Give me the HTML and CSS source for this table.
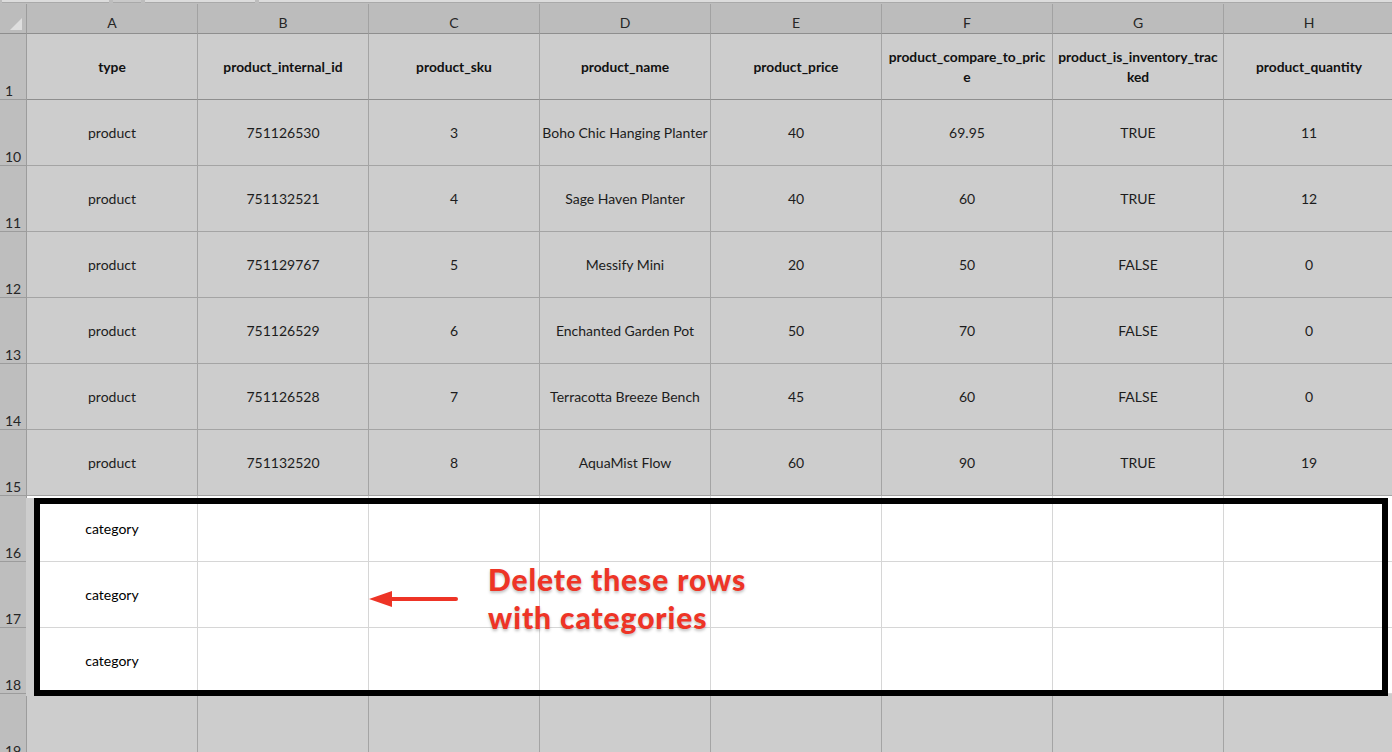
FILE: index.html
```html
<!DOCTYPE html>
<html>
<head>
<meta charset="utf-8">
<link rel="stylesheet" href="styles.css">
</head>
<body>
<div class="tabs"><span class="tab t1"></span><span class="tab t2"></span><span class="tab t3"></span><span class="tab t4"></span></div>
<div class="sheet">
  <div class="grid">
    <div class="corner"><span class="tri"></span></div>
    <div class="colh">A</div><div class="colh">B</div><div class="colh">C</div><div class="colh">D</div><div class="colh">E</div><div class="colh">F</div><div class="colh">G</div><div class="colh">H</div>

    <div class="rowh">1</div>
    <div class="c b">type</div><div class="c b">product_internal_id</div><div class="c b">product_sku</div><div class="c b">product_name</div><div class="c b">product_price</div><div class="c b">product_compare_to_pric<br>e</div><div class="c b">product_is_inventory_trac<br>ked</div><div class="c b">product_quantity</div>

    <div class="rowh">10</div>
    <div class="c">product</div><div class="c">751126530</div><div class="c">3</div><div class="c">Boho Chic Hanging Planter</div><div class="c">40</div><div class="c">69.95</div><div class="c">TRUE</div><div class="c">11</div>

    <div class="rowh">11</div>
    <div class="c">product</div><div class="c">751132521</div><div class="c">4</div><div class="c">Sage Haven Planter</div><div class="c">40</div><div class="c">60</div><div class="c">TRUE</div><div class="c">12</div>

    <div class="rowh">12</div>
    <div class="c">product</div><div class="c">751129767</div><div class="c">5</div><div class="c">Messify Mini</div><div class="c">20</div><div class="c">50</div><div class="c">FALSE</div><div class="c">0</div>

    <div class="rowh">13</div>
    <div class="c">product</div><div class="c">751126529</div><div class="c">6</div><div class="c">Enchanted Garden Pot</div><div class="c">50</div><div class="c">70</div><div class="c">FALSE</div><div class="c">0</div>

    <div class="rowh">14</div>
    <div class="c">product</div><div class="c">751126528</div><div class="c">7</div><div class="c">Terracotta Breeze Bench</div><div class="c">45</div><div class="c">60</div><div class="c">FALSE</div><div class="c">0</div>

    <div class="rowh">15</div>
    <div class="c">product</div><div class="c">751132520</div><div class="c">8</div><div class="c">AquaMist Flow</div><div class="c">60</div><div class="c">90</div><div class="c">TRUE</div><div class="c">19</div>

    <div class="rowh">16</div>
    <div class="c w">category</div><div class="c w"></div><div class="c w"></div><div class="c w"></div><div class="c w"></div><div class="c w"></div><div class="c w"></div><div class="c w"></div>

    <div class="rowh">17</div>
    <div class="c w">category</div><div class="c w"></div><div class="c w"></div><div class="c w"></div><div class="c w"></div><div class="c w"></div><div class="c w"></div><div class="c w"></div>

    <div class="rowh">18</div>
    <div class="c w">category</div><div class="c w"></div><div class="c w"></div><div class="c w"></div><div class="c w"></div><div class="c w"></div><div class="c w"></div><div class="c w"></div>

    <div class="rowh">19</div>
    <div class="c"></div><div class="c"></div><div class="c"></div><div class="c"></div><div class="c"></div><div class="c"></div><div class="c"></div><div class="c"></div>
  </div>
  <div class="highlight"></div>
  <div class="note">
    <svg class="arrow" width="92" height="20" viewBox="0 0 92 20">
      <path d="M20 10 H88" stroke="#ee3426" stroke-width="4" stroke-linecap="round" fill="none"/>
      <path d="M1 10 L24 2 L24 18 Z" fill="#ee3426"/>
    </svg>
    <div class="note-text">Delete these rows<br>with categories</div>
  </div>
</div>
</body>
</html>
```
FILE: styles.css
```css
* { box-sizing: border-box; }
html, body { margin: 0; padding: 0; }
body {
  width: 1392px;
  height: 752px;
  overflow: hidden;
  background: #cdcdcd;
  font-family: Lato, "Liberation Sans", sans-serif;
  color: #1c1c1c;
}
.tabs {
  height: 4px;
  background: #bdbdbd;
  display: flex;
  gap: 4px;
  align-items: flex-start;
}
.tab { height: 3px; background: #dcdcdc; border-bottom: 1px solid #a9a9a9; }
.t1 { width: 107px; margin-left: 2px; }
.t2 { width: 28px; background: #c9c9c9; }
.t3 { width: 110px; }
.t4 { flex: 1; }
.sheet { position: relative; }
.grid {
  display: grid;
  grid-template-columns: 27px repeat(8, 171px);
  grid-template-rows: 30px repeat(11, 66px);
}
.corner {
  background: #bcbcbc;
  border-right: 1px solid #9c9c9c;
  border-bottom: 1px solid #8e8e8e;
  position: relative;
}
.tri {
  position: absolute;
  right: 4px;
  bottom: 3px;
  width: 0;
  height: 0;
  border-left: 12px solid transparent;
  border-bottom: 12px solid #dedede;
}
.colh {
  background: #bcbcbc;
  border-right: 1px solid #a2a2a2;
  border-bottom: 1px solid #8e8e8e;
  display: flex;
  align-items: center;
  justify-content: center;
  font-size: 14px;
  color: #262626;
  padding-top: 8px;
}
.rowh {
  background: #bebebe;
  border-right: 1px solid #9c9c9c;
  border-bottom: 1px solid #9c9c9c;
  display: flex;
  align-items: flex-end;
  padding: 0 0 0 5px;
  font-size: 14px;
  color: #262626;
}
.c {
  background: #cdcdcd;
  border-right: 1px solid #a4a4a4;
  border-bottom: 1px solid #a4a4a4;
  display: flex;
  align-items: center;
  justify-content: center;
  text-align: center;
  font-size: 14px;
  line-height: 20px;
  white-space: nowrap;
  padding-top: 1px;
}
.c.b { font-weight: 700; color: #111; border-bottom-color: #8e8e8e; font-size: 13.8px; }
.c.w {
  background: #ffffff;
  color: #000;
  border-right-color: #d6d6d6;
  border-bottom-color: #d6d6d6;
}
.highlight {
  position: absolute;
  left: 34px;
  top: 494px;
  width: 1354px;
  height: 198px;
  border: 6px solid #000;
  box-shadow: -8px 0 0 0 #cdcdcd;
}
.note {
  position: absolute;
  left: 368px;
  top: 556px;
  display: flex;
  align-items: center;
  gap: 28px;
}
.arrow { display: block; margin-top: 2px; }
.note-text {
  font-family: Lato, "Liberation Sans", sans-serif;
  font-weight: 900;
  font-size: 30px;
  line-height: 38px;
  color: #ee3426;
  text-shadow: 0 2px 3px rgba(0,0,0,0.25);
  letter-spacing: 0.9px;
}
```
